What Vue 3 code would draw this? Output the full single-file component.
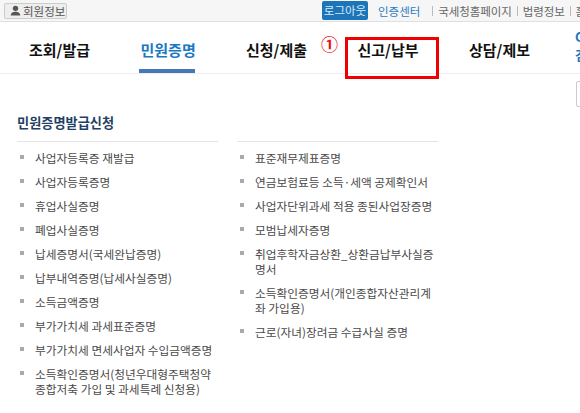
<template>
  <div class="page">
    <header class="topbar">
      <button class="member-btn">
        <svg class="member-icon" viewBox="0 0 12 12" width="11" height="11">
          <circle cx="6" cy="3.6" r="2.9" fill="#555" />
          <path d="M0.8 11.5 C1 8.2 3.5 7.4 6 7.4 C8.5 7.4 11 8.2 11.2 11.5 Z" fill="#555" />
        </svg>
        회원정보
      </button>
      <div class="top-links">
        <span class="logout">로그아웃</span>
        <span class="cert">인증센터</span>
        <span class="sub-link">국세청홈페이지</span>
        <span class="sub-link">법령정보</span>
        <span class="sub-link">홈택스</span>
      </div>
    </header>

    <nav class="gnb">
      <a v-for="m in menus" :key="m" class="gnb-item" :class="{ active: m === '민원증명' }">{{ m }}</a>
      <span class="gnb-edge">
        <span>C</span>
        <span>검</span>
      </span>
      <span class="mark">①</span>
      <span class="red-box"></span>
    </nav>

    <main class="content">
      <section class="col">
        <h2 class="title">민원증명발급신청</h2>
        <ul class="list">
          <li v-for="item in leftItems" :key="item">{{ item }}</li>
        </ul>
      </section>
      <section class="col second">
        <ul class="list">
          <li v-for="item in rightItems" :key="item">{{ item }}</li>
        </ul>
      </section>
      <span class="side-box"></span>
    </main>
  </div>
</template>

<script setup>
const menus = ["조회/발급", "민원증명", "신청/제출", "신고/납부", "상담/제보"];

const leftItems = [
  "사업자등록증 재발급",
  "사업자등록증명",
  "휴업사실증명",
  "폐업사실증명",
  "납세증명서(국세완납증명)",
  "납부내역증명(납세사실증명)",
  "소득금액증명",
  "부가가치세 과세표준증명",
  "부가가치세 면세사업자 수입금액증명",
  "소득확인증명서(청년우대형주택청약 종합저축 가입 및 과세특례 신청용)",
];

const rightItems = [
  "표준재무제표증명",
  "연금보험료등 소득·세액 공제확인서",
  "사업자단위과세 적용 종된사업장증명",
  "모범납세자증명",
  "취업후학자금상환_상환금납부사실증명서",
  "소득확인증명서(개인종합자산관리계좌 가입용)",
  "근로(자녀)장려금 수급사실 증명",
];
</script>

<style scoped>
.page {
  position: relative;
  width: 580px;
  height: 413px;
  overflow: hidden;
  background: #fff;
  font-family: "Noto Sans CJK KR", "Liberation Sans", sans-serif;
  color: #444;
}

.topbar {
  display: flex;
  justify-content: space-between;
  align-items: center;
  height: 21px;
  padding-left: 4px;
  background: #f6f6f6;
  border-bottom: 1px solid #e0e0e0;
}

.member-btn {
  display: flex;
  align-items: center;
  gap: 2px;
  width: 63px;
  height: 16px;
  padding: 0 0 0 5px;
  font: inherit;
  font-size: 11.5px;
  line-height: 14px;
  color: #555;
  background: #eee;
  border: 1px solid #ccc;
  border-radius: 2px;
  white-space: nowrap;
}

.top-links {
  display: flex;
  align-items: center;
  width: 258px;
  font-size: 11.5px;
  white-space: nowrap;
}

.logout {
  flex-shrink: 0;
  width: 46px;
  height: 19px;
  line-height: 19px;
  text-align: center;
  color: #d8ecf8;
  background: #1c75b8;
  border-radius: 2px;
}

.cert {
  flex-shrink: 0;
  margin: 0 7px 0 10px;
  color: #2b7cc0;
}

.sub-link {
  flex-shrink: 0;
  margin-left: 5px;
  padding-left: 5px;
  letter-spacing: -0.1px;
  color: #666;
  border-left: 1px solid #bbb;
  line-height: 10px;
}

.gnb {
  position: relative;
  display: flex;
  height: 51px;
  padding-left: 29px;
  gap: 51.5px;
  border-bottom: 1px solid #eee;
}

.gnb-item {
  box-sizing: border-box;
  width: 60px;
  height: 51px;
  padding-top: 17px;
  font-size: 15px;
  line-height: 22px;
  font-weight: 700;
  color: #111;
  white-space: nowrap;
}

.gnb-item.active {
  width: 56px;
  margin-left: -2px;
  padding-left: 2px;
  color: #1a78c2;
  border-bottom: 4px solid #4479b8;
}

.gnb-edge {
  position: absolute;
  left: 575px;
  top: 7px;
  display: flex;
  flex-direction: column;
  gap: 2px;
  font-size: 13px;
  line-height: 16px;
  font-weight: 700;
  color: #1a78c2;
}

.mark {
  position: absolute;
  left: 321px;
  top: 12px;
  font-size: 17px;
  line-height: 20px;
  font-weight: 700;
  color: #e8141c;
}

.red-box {
  position: absolute;
  left: 345px;
  top: 15px;
  width: 88px;
  height: 36px;
  border: 3px solid #f00000;
}

.content {
  position: relative;
  display: flex;
  gap: 19px;
  padding: 0 0 0 17px;
}

.col {
  width: 201px;
  flex-shrink: 0;
}

.title {
  height: 68px;
  margin: 0;
  padding-top: 39px;
  box-sizing: border-box;
  font-size: 13.2px;
  line-height: 20px;
  font-weight: 700;
  color: #1f3f66;
  border-bottom: 1px solid #e4e4e4;
}

.list {
  margin: 0;
  padding: 3px 0 0;
  list-style: none;
}

.second .list {
  margin-top: 67px;
  border-top: 1px solid #e4e4e4;
}

.list li {
  position: relative;
  padding: 4.5px 0 4.5px 18px;
  font-size: 11.7px;
  line-height: 15px;
  color: #4a4a4a;
}

.list li::before {
  content: "";
  position: absolute;
  left: 3px;
  top: 10px;
  width: 4px;
  height: 4px;
  background: #aaa;
}

.side-box {
  position: absolute;
  left: 576px;
  top: 7px;
  width: 20px;
  height: 24px;
  border: 1px solid #ccc;
  border-radius: 2px;
}
</style>
